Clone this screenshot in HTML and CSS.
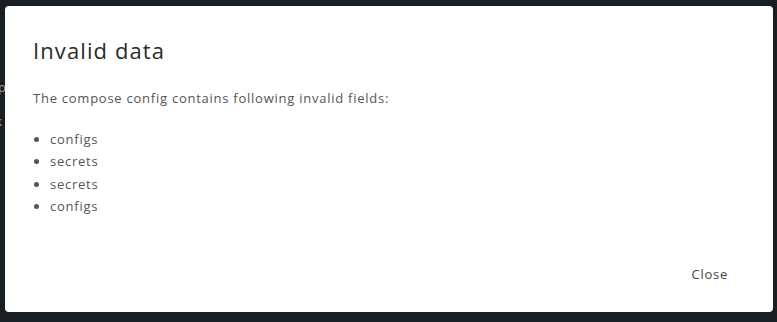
FILE: index.html
```html
<!DOCTYPE html>
<html lang="en">
<head>
    <meta charset="UTF-8">
    <meta name="viewport" content="width=device-width, initial-scale=1.0">
    <title>Invalid data</title>
    <link rel="stylesheet" href="styles.css">
</head>
<body>
    <div class="page">
        <div class="page-line first">Data</div>
        <div class="page-line second">Compose</div>
        <div class="page-line third">Stack</div>
    </div>
    <div class="modal">
        <h2 class="modal-title">Invalid data</h2>
        <div class="modal-body">
            <p>The compose config contains following invalid fields:</p>
            <ul class="fields">
                <li>configs</li>
                <li>secrets</li>
                <li>secrets</li>
                <li>configs</li>
            </ul>
        </div>
        <div class="modal-footer">
            <button class="btn-close">Close</button>
        </div>
    </div>
</body>
</html>
```

FILE: styles.css
```css
body{
    margin: 0;
    width: 777px;
    height: 322px;
    overflow: hidden;
    background-color: #1a1f24;
    font-family: "Open Sans", "Liberation Sans", sans-serif;
    position: relative;
}
.page{
    padding-top: 24px;
    margin-left: -30px;
    color: #9aa0a6;
    font-size: 13px;
}
.page-line{
    height: 17px;
}
.page-line.second{
    margin-top: 37px;
}
.page-line.third{
    margin-top: 17px;
}
.modal{
    position: absolute;
    left: 5px;
    top: 6px;
    width: 768px;
    height: 306px;
    background-color: #fff;
    border-radius: 4px;
    box-sizing: border-box;
    padding: 30px 28px 0 28px;
    display: flex;
    flex-direction: column;
}
.modal-title{
    margin: 0;
    font-weight: 400;
    font-size: 22px;
    letter-spacing: 1.1px;
    color: #2b2b2b;
    line-height: 28px;
}
.modal-body{
    margin-top: 25px;
    color: #555;
    font-size: 13px;
    letter-spacing: 0.75px;
}
.modal-body p{
    margin: 0;
    line-height: 18px;
}
.fields{
    margin: 21px 0 0 0;
    padding-left: 17px;
}
.fields li{
    line-height: 22.33px;
}
.modal-footer{
    margin-top: auto;
    display: flex;
    justify-content: flex-end;
    padding-bottom: 29px;
}
.btn-close{
    border: none;
    background: none;
    font-family: inherit;
    font-size: 13px;
    letter-spacing: 0.75px;
    color: #444;
    padding: 0 17px;
    cursor: pointer;
}
```
